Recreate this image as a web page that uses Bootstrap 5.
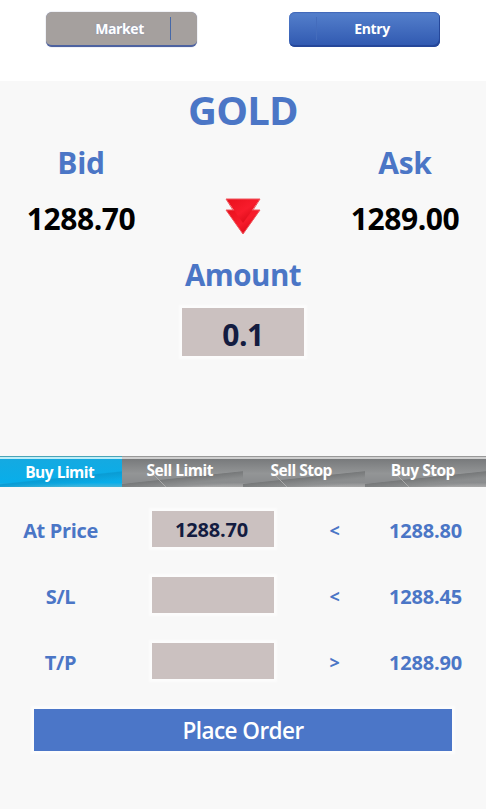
<!DOCTYPE html>
<html lang="en">
<head>
<meta charset="utf-8">
<meta name="viewport" content="width=device-width, initial-scale=1">
<title>Gold order entry</title>
<link href="https://cdn.jsdelivr.net/npm/bootstrap@5.3.0/dist/css/bootstrap.min.css" rel="stylesheet">
<style>
  body { font-family: "Open Sans", "Noto Sans", sans-serif; width: 486px; height: 810px; background: #fff; overflow: hidden; }
  .blue { color: #4b76c6; }
  .mode-bar { height: 81px; padding: 12px 46px 0; }
  .mode-btn { width: 151px; height: 35px; border: 0; border-radius: 6px; padding: 0; color: #fff; font-size: 14px; font-weight: 700; line-height: 33px; letter-spacing: -.4px; text-shadow: 0 0 2px #8895b8; }
  .mode-market { background: #a5a09e; border-bottom: 2px solid #4d62a0; box-shadow: 0 0 1px #6b79a8; padding-right: 4px; }
  .mode-entry { background: linear-gradient(#5580cc, #2f58b0); box-shadow: inset -1px -2px 0 #25479a, inset 0 1px 1px #4268b8; padding: 0 0 2px 15px; text-shadow: none; }
  .divider { width: 1px; height: 23px; background: #4568a8; top: 5px; }
  .mode-market .divider { left: 124px; }
  .mode-entry .divider { left: 27px; background: #446cbc; }
  .panel { height: 728px; background: #f8f8f8; }
  .symbol { height: 57px; font-size: 40px; font-weight: 700; line-height: 58px; letter-spacing: -.8px; }
  .heads { height: 46px; font-size: 30px; font-weight: 700; line-height: 49px; letter-spacing: -.3px; }
  .prices { height: 67px; font-size: 30px; font-weight: 700; line-height: 69px; letter-spacing: -.4px; color: #000; }
  .side { width: 162px; }
  .amount-label { height: 44px; font-size: 29.5px; font-weight: 700; line-height: 47px; letter-spacing: -.5px; }
  .entry-box { width: 122px; height: 36px; border: 0; border-radius: 0; padding: 2px 2px 0 0; background: #cbc1c0; color: #131c40; text-align: center; font-size: 20px; font-weight: 700; letter-spacing: -.2px; box-shadow: 0 0 2px 3px #fcfcfc; outline: 0; }
  .amount-box { height: 48px; margin-top: 13px; font-size: 30px; padding: 4px 0 0; letter-spacing: -.5px; }
  .order-tabs { margin-top: 100px; height: 31px; }
  .order-tab { flex: 0 0 121.5px; height: 31px; border: 0; border-radius: 0; padding: 0 5px 4px 0; color: #fff; font-size: 15.5px; font-weight: 700; line-height: 26px; letter-spacing: -.5px; border-top: 1px solid #999;
    background:
      linear-gradient(45deg, transparent 49.5%, #aaa 50%, transparent 51%) 22px 16px / 30px 14px no-repeat,
      linear-gradient(#cfcfcf 0 2px, transparent 2px),
      linear-gradient(174deg, transparent 62%, #77797a 64%, #8b8d8e 78%, transparent 90%),
      linear-gradient(#747678, #939596 55%, #8a8c8e 85%, #aaa); }
  .btn.order-tab.active { color: #fff; padding: 0 2px 1px 0; border-top-color: #4aa5b8;
    background: linear-gradient(#bfeef8 0 2px, transparent 2px), linear-gradient(174deg, transparent 62%, #0a9cd4 65%, transparent 85%), linear-gradient(#16a9e0, #08aeea 85%, #46b4d8); }
  .levels { padding-top: 9px; }
  .level { display: grid; grid-template-columns: 121px 183px 61px 121px; height: 66px; align-items: center; justify-items: center; font-size: 20px; font-weight: 700; line-height: 66px; letter-spacing: -.2px; }
  .level > span { padding-top: 3px; line-height: 63px; }
  .label { letter-spacing: -.35px; }
  .sign { font-size: 18px; }
  .place { display: block; width: 418px; height: 42px; margin: 15px 0 0 34px; border: 0; border-radius: 0; padding: 1px 0 0; background: #4b76c8; color: #fff; font-size: 22.5px; font-weight: 600; line-height: 42px; letter-spacing: -.55px; box-shadow: 0 0 2px 3px #fcfcfc; }
</style>
</head>
<body>
<header class="mode-bar d-flex justify-content-between">
  <button class="btn mode-btn mode-market position-relative">Market<span class="divider position-absolute"></span></button>
  <button class="btn mode-btn mode-entry position-relative"><span class="divider position-absolute"></span>Entry</button>
</header>
<main class="panel">
  <h1 class="symbol blue text-center m-0">GOLD</h1>
  <div class="heads blue d-flex justify-content-between text-center"><span class="side">Bid</span><span class="side">Ask</span></div>
  <div class="prices d-flex justify-content-between text-center">
    <span class="side">1288.70</span>
    <svg class="mt-2 pt-1" width="38" height="44" viewBox="0 0 38 40" aria-label="Down">
      <defs><linearGradient id="red" x1="0" y1="0" x2="1" y2="1"><stop offset="0" stop-color="#e8101c"/><stop offset=".5" stop-color="#f81c2c"/><stop offset="1" stop-color="#c8000c"/></linearGradient></defs>
      <path d="M2 14H36L19 38Z" fill="url(#red)" stroke="#f0555c" stroke-linejoin="round"/>
      <path d="M2 3H36L19 27Z" fill="url(#red)"/>
      <path d="M9 14L2 3H36L29 14" fill="none" stroke="#f0555c" stroke-linejoin="round"/>
    </svg>
    <span class="side">1289.00</span>
  </div>
  <div class="amount-label blue text-center">Amount</div>
  <input class="entry-box amount-box d-block mx-auto" value="0.1" aria-label="Amount">
  <nav class="order-tabs d-flex">
    <button class="btn order-tab active">Buy Limit</button>
    <button class="btn order-tab">Sell Limit</button>
    <button class="btn order-tab">Sell Stop</button>
    <button class="btn order-tab">Buy Stop</button>
  </nav>
  <section class="levels blue">
    <div class="level"><span class="label">At Price</span><input class="entry-box" value="1288.70" aria-label="At price"><span class="sign">&lt;</span><span>1288.80</span></div>
    <div class="level"><span class="label">S/L</span><input class="entry-box" aria-label="Stop loss"><span class="sign">&lt;</span><span>1288.45</span></div>
    <div class="level"><span class="label">T/P</span><input class="entry-box" aria-label="Take profit"><span class="sign">&gt;</span><span>1288.90</span></div>
  </section>
  <button class="btn place">Place Order</button>
</main>
<script src="https://cdn.jsdelivr.net/npm/bootstrap@5.3.0/dist/js/bootstrap.bundle.min.js"></script>
</body>
</html>
